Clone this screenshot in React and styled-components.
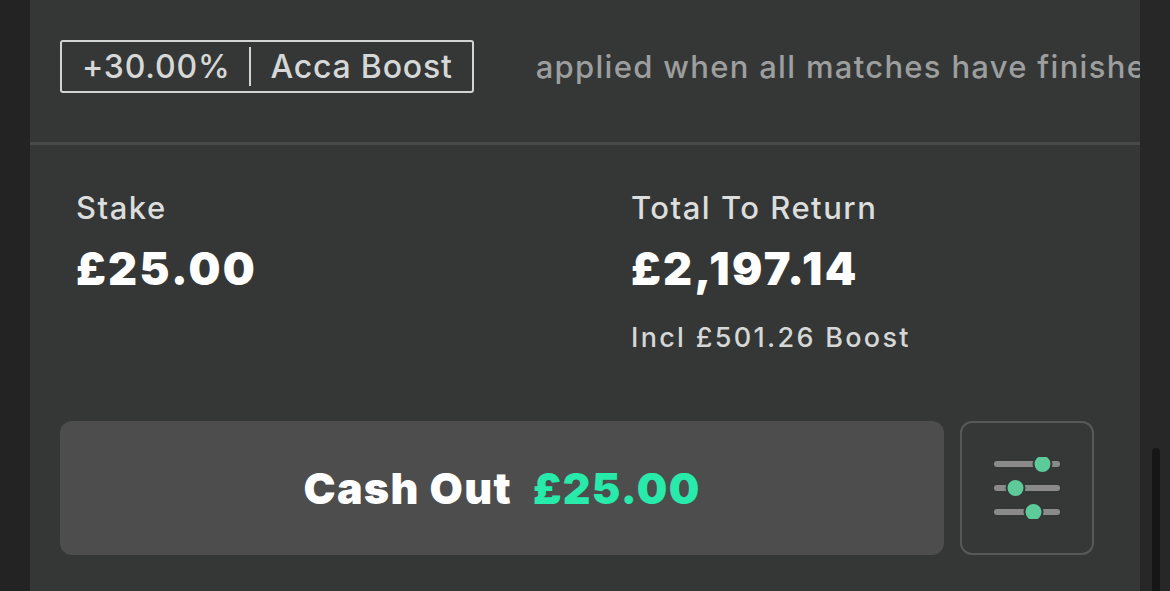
import React from 'react';
import styled, { createGlobalStyle } from 'styled-components';

const GlobalStyle = createGlobalStyle`
  html, body {
    margin: 0;
    padding: 0;
    background: #232323;
  }
  body {
    font-family: 'Inter', 'Noto Sans', sans-serif;
    -webkit-font-smoothing: antialiased;
  }
`;

const Page = styled.div`
  display: flex;
  width: 1170px;
  height: 591px;
  overflow: hidden;
  background: #232323;
`;

const LeftGutter = styled.div`
  width: 30px;
  flex-shrink: 0;
  background: #232323;
`;

const RightGutter = styled.div`
  width: 30px;
  flex-shrink: 0;
  background: #272727;
  display: flex;
  padding-top: 448px;
  padding-left: 12px;
  box-sizing: border-box;
`;

const ScrollThumb = styled.div`
  width: 8px;
  height: 180px;
  border-radius: 4px;
  background: #161616;
`;

const Panel = styled.div`
  flex: 1;
  min-width: 0;
  background: #343736;
  display: flex;
  flex-direction: column;
`;

const BoostRow = styled.div`
  height: 142px;
  box-sizing: border-box;
  padding: 40px 0 0 30px;
  display: flex;
  align-items: flex-start;
  gap: 62px;
  overflow: hidden;
  white-space: nowrap;
`;

const Badge = styled.div`
  height: 53px;
  box-sizing: border-box;
  border: 2px solid #d2d3d3;
  border-radius: 3px;
  padding: 0 19px 0 20px;
  display: flex;
  align-items: center;
  gap: 19px;
  flex-shrink: 0;
`;

const BadgeText = styled.span`
  font-size: 32px;
  line-height: 49px;
  font-weight: 500;
  letter-spacing: 0.8px;
  color: #d6d7d7;
`;

const BadgeDivider = styled.span`
  width: 2px;
  height: 39px;
  background: #d2d3d3;
`;

const Note = styled.span`
  font-size: 31px;
  line-height: 49px;
  margin-top: 2px;
  font-weight: 550;
  letter-spacing: 1.3px;
  color: #9d9e9e;
`;

const Divider = styled.div`
  height: 3px;
  background: #474a49;
`;

const Summary = styled.div`
  display: grid;
  grid-template-columns: 555px 1fr;
  padding: 45px 0 0 46px;
`;

const Column = styled.div`
  display: flex;
  flex-direction: column;
`;

const Label = styled.div`
  font-size: 31px;
  line-height: 36px;
  font-weight: 500;
  letter-spacing: 1.5px;
  color: #dcdddd;
`;

const Amount = styled.div`
  margin-top: 19px;
  font-size: 45px;
  line-height: 48px;
  font-weight: 900;
  letter-spacing: 2.3px;
  color: #ffffff;
`;

const Sub = styled.div`
  margin-top: 30px;
  font-size: 27px;
  line-height: 30px;
  font-weight: 500;
  letter-spacing: 2.3px;
  color: #d6d7d7;
`;

const Actions = styled.div`
  display: flex;
  gap: 16px;
  padding: 0 46px 0 30px;
  margin-top: auto;
  margin-bottom: 36px;
`;

const CashOutButton = styled.button`
  flex: 1;
  height: 134px;
  border: none;
  border-radius: 12px;
  background: #4d4d4d;
  display: flex;
  align-items: center;
  justify-content: center;
  gap: 21px;
  font-family: inherit;
  font-size: 43px;
  font-weight: 900;
  letter-spacing: 1.3px;
  cursor: pointer;
`;

const ButtonText = styled.span`
  color: ${(p) => (p.$accent ? '#27eaab' : '#ffffff')};
`;

const SettingsButton = styled.button`
  width: 134px;
  height: 134px;
  box-sizing: border-box;
  border: 2px solid #575858;
  border-radius: 12px;
  background: #363737;
  display: flex;
  align-items: center;
  justify-content: center;
  padding: 0;
  cursor: pointer;
`;

function SlidersIcon() {
  const rows = [
    { y: 7, x: 50.5 },
    { y: 31, x: 23.5 },
    { y: 55, x: 41.5 },
  ];
  return (
    <svg width="70" height="62" viewBox="0 0 70 62">
      {rows.map((r) => (
        <g key={r.y}>
          <line x1="5" y1={r.y} x2="65" y2={r.y} stroke="#8a8a8a" strokeWidth="6" strokeLinecap="round" />
          <circle cx={r.x} cy={r.y} r="9" fill="#5dca99" stroke="#363737" strokeWidth="2" />
        </g>
      ))}
    </svg>
  );
}

export default function App() {
  return (
    <>
      <GlobalStyle />
      <Page>
        <LeftGutter />
        <Panel>
          <BoostRow>
            <Badge>
              <BadgeText>+30.00%</BadgeText>
              <BadgeDivider />
              <BadgeText>Acca Boost</BadgeText>
            </Badge>
            <Note>applied when all matches have finished</Note>
          </BoostRow>
          <Divider />
          <Summary>
            <Column>
              <Label>Stake</Label>
              <Amount>£25.00</Amount>
            </Column>
            <Column>
              <Label>Total To Return</Label>
              <Amount>£2,197.14</Amount>
              <Sub>Incl £501.26 Boost</Sub>
            </Column>
          </Summary>
          <Actions>
            <CashOutButton>
              <ButtonText>Cash Out</ButtonText>
              <ButtonText $accent>£25.00</ButtonText>
            </CashOutButton>
            <SettingsButton>
              <SlidersIcon />
            </SettingsButton>
          </Actions>
        </Panel>
        <RightGutter>
          <ScrollThumb />
        </RightGutter>
      </Page>
    </>
  );
}
